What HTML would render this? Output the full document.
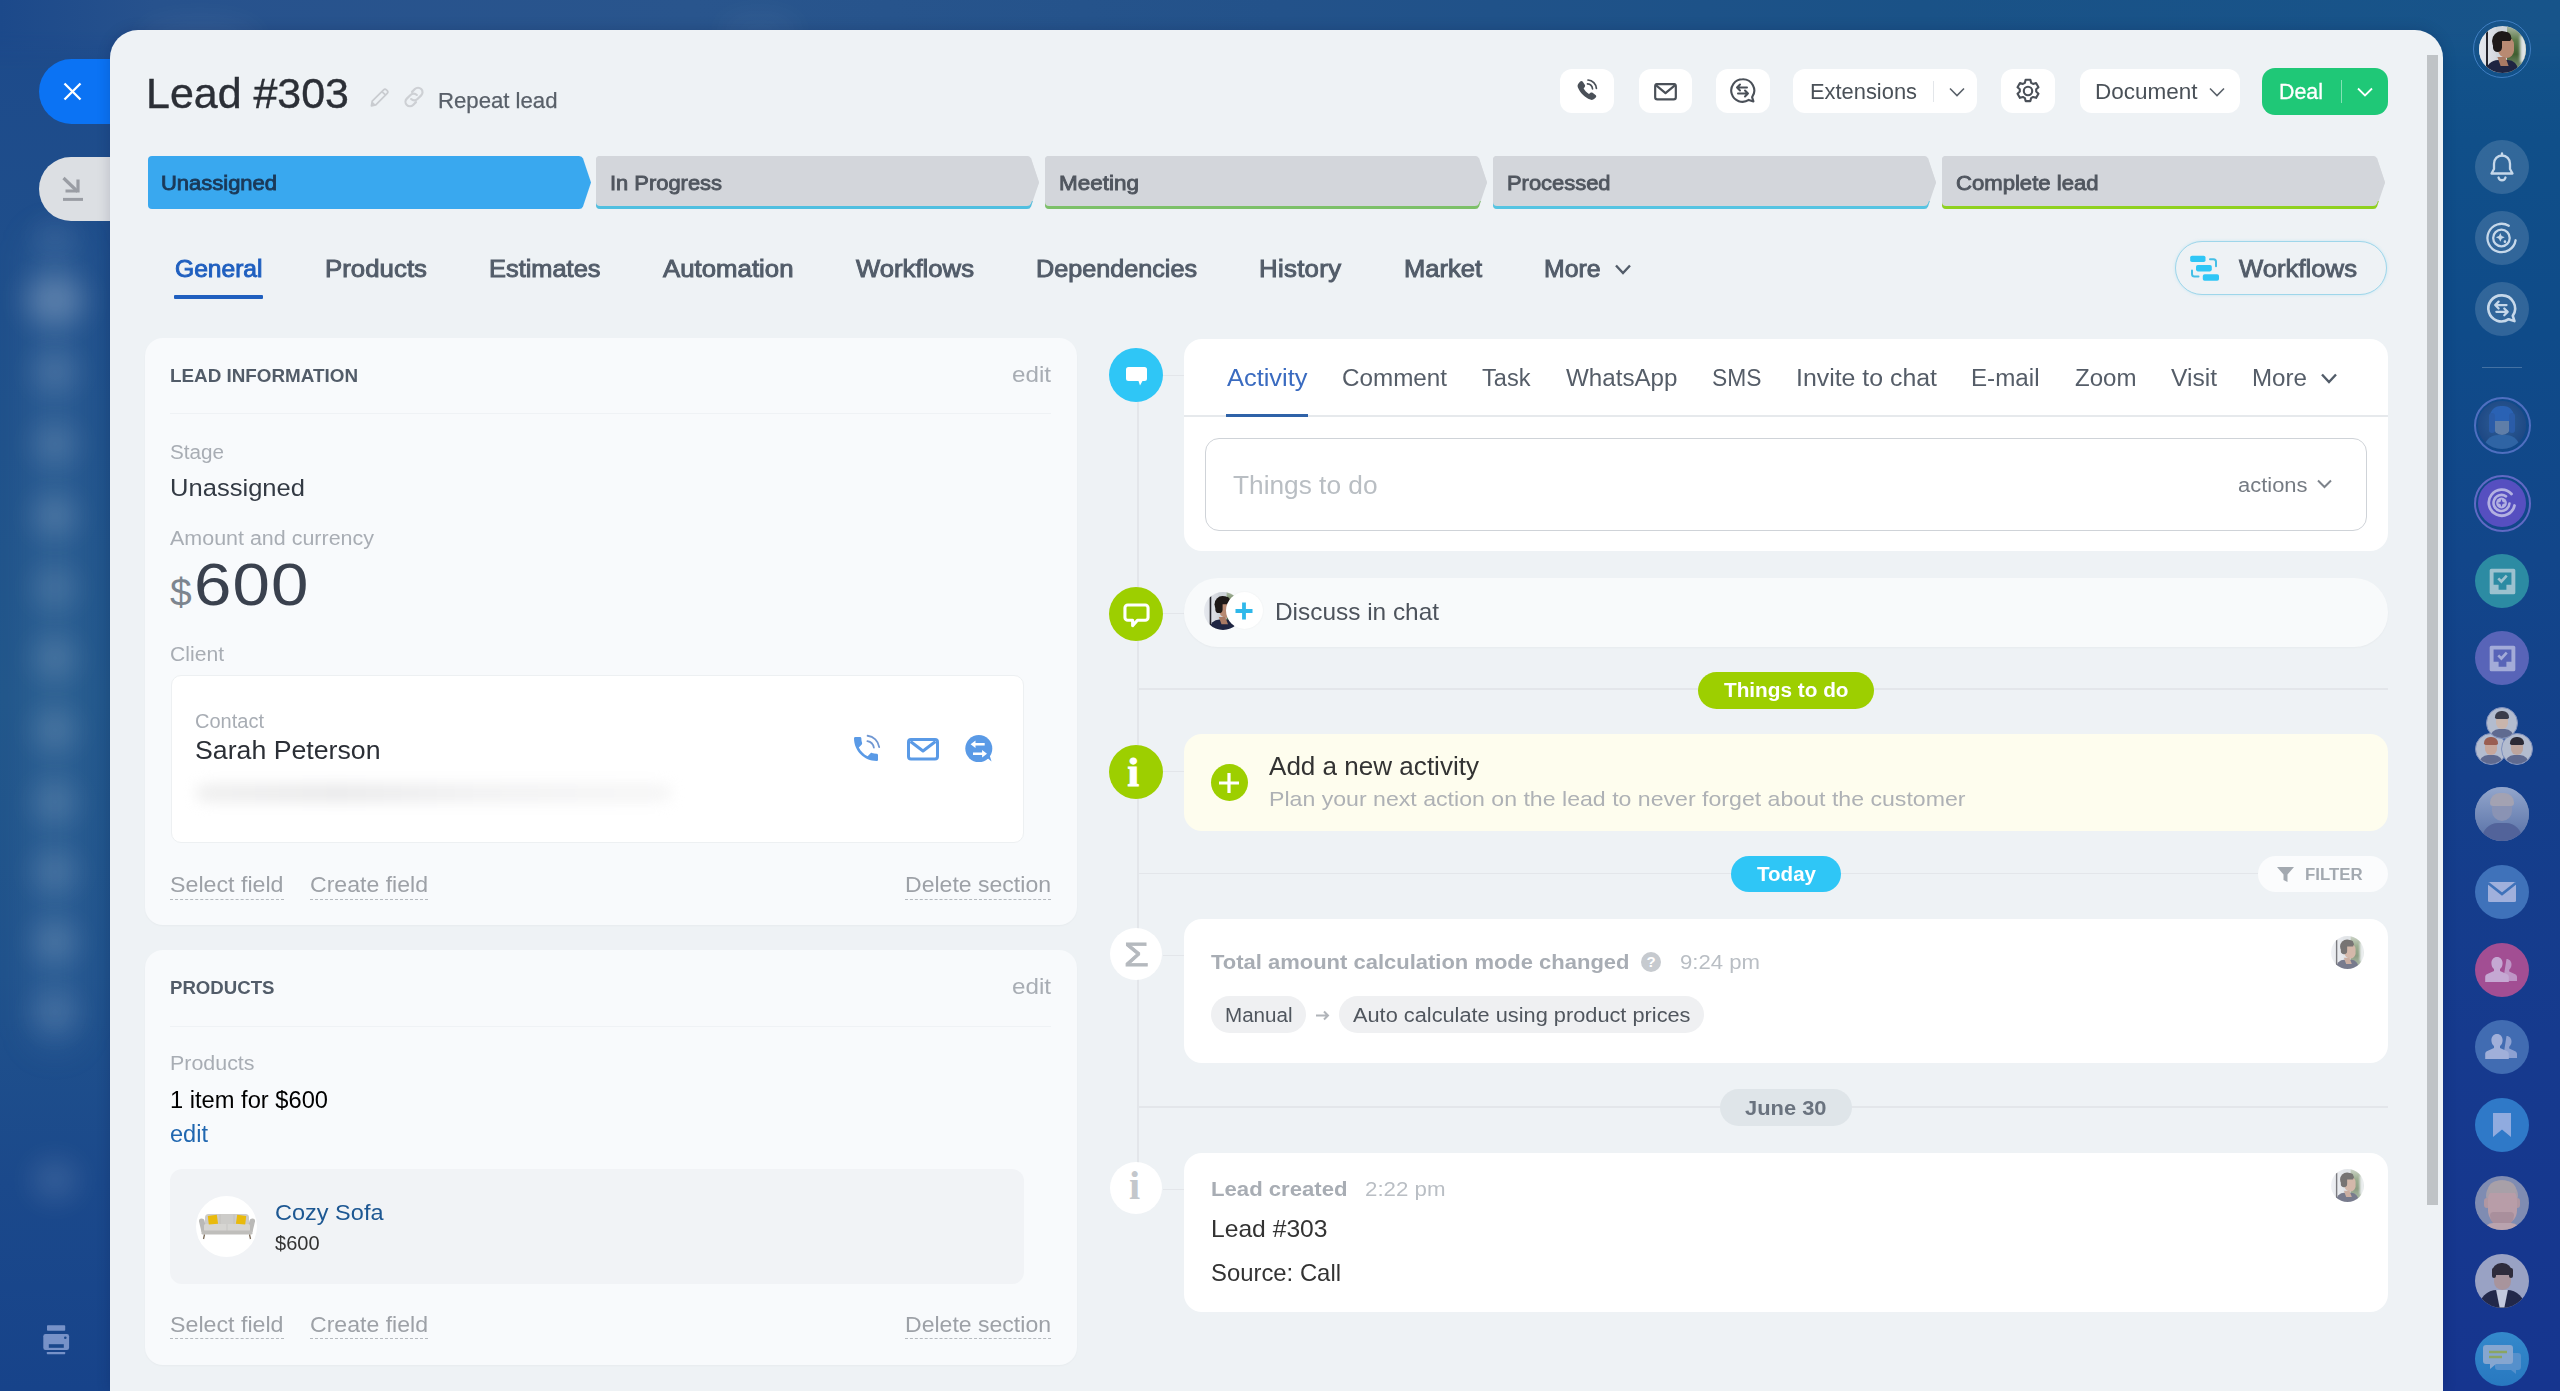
<!DOCTYPE html>
<html lang="en"><head><meta charset="utf-8"><title>Lead #303</title>
<style>
html,body{margin:0;padding:0}
body{width:2560px;height:1391px;overflow:hidden;position:relative;font-family:"Liberation Sans",sans-serif;
background:linear-gradient(90deg,rgba(30,72,140,0) 0%,rgba(30,72,140,0) 92%,rgba(24,56,140,.0) 100%),linear-gradient(180deg,#24538a 0%,#22508b 30%,#1f4a8c 60%,#1c4190 100%);}
.b{position:absolute;display:block}
.t{position:absolute;line-height:1;white-space:nowrap}
</style></head>
<body>
<div class="b" style="left:0;top:0;width:140px;height:1391px;background:linear-gradient(180deg,#1d4a8b 0%,#1f4f8b 22%,#22578b 50%,#20528c 70%,#1b498b 85%,#17438a 100%)"></div>
<div class="b" style="left:2420px;top:0;width:140px;height:1391px;background:linear-gradient(180deg,#15548a 0%,#104f89 10%,#0f4b89 24%,#12468a 40%,#143f8b 56%,#163a8e 75%,#16358f 100%)"></div>
<div class="b" style="left:0;top:0;width:2560px;height:70px;-webkit-mask-image:linear-gradient(180deg,#000 45%,transparent 100%);mask-image:linear-gradient(180deg,#000 45%,transparent 100%);background:linear-gradient(90deg,#1c498a 0%,#27528d 6%,#29558d 27%,#23528a 50%,#1a5287 75%,#17548a 100%)"></div>
<div class="b" style="left:30px;top:230px;width:50px;height:820px;background:rgba(120,160,200,.16);border-radius:25px;filter:blur(16px)"></div>
<div class="b" style="left:25.0px;top:275.0px;width:60px;height:50px;background:rgba(255,255,255,0.22);border-radius:50%;filter:blur(14px)"></div>
<div class="b" style="left:33.0px;top:354.0px;width:44px;height:36px;background:rgba(255,255,255,0.14);border-radius:50%;filter:blur(14px)"></div>
<div class="b" style="left:33.0px;top:426.0px;width:44px;height:36px;background:rgba(255,255,255,0.14);border-radius:50%;filter:blur(14px)"></div>
<div class="b" style="left:33.0px;top:498.0px;width:44px;height:36px;background:rgba(255,255,255,0.16);border-radius:50%;filter:blur(14px)"></div>
<div class="b" style="left:33.0px;top:570.0px;width:44px;height:36px;background:rgba(255,255,255,0.12);border-radius:50%;filter:blur(14px)"></div>
<div class="b" style="left:33.0px;top:640.0px;width:44px;height:36px;background:rgba(255,255,255,0.14);border-radius:50%;filter:blur(14px)"></div>
<div class="b" style="left:33.0px;top:712.0px;width:44px;height:36px;background:rgba(255,255,255,0.14);border-radius:50%;filter:blur(14px)"></div>
<div class="b" style="left:33.0px;top:784.0px;width:44px;height:36px;background:rgba(255,255,255,0.14);border-radius:50%;filter:blur(14px)"></div>
<div class="b" style="left:33.0px;top:854.0px;width:44px;height:36px;background:rgba(255,255,255,0.14);border-radius:50%;filter:blur(14px)"></div>
<div class="b" style="left:33.0px;top:924.0px;width:44px;height:36px;background:rgba(255,255,255,0.16);border-radius:50%;filter:blur(14px)"></div>
<div class="b" style="left:33.0px;top:994.0px;width:44px;height:36px;background:rgba(255,255,255,0.13);border-radius:50%;filter:blur(14px)"></div>
<div class="b" style="left:33.0px;top:1160.0px;width:44px;height:40px;background:rgba(255,255,255,0.12);border-radius:50%;filter:blur(14px)"></div>
<div class="b" style="left:35.0px;top:221.0px;width:40px;height:30px;background:rgba(255,255,255,0.08);border-radius:50%;filter:blur(14px)"></div>
<div class="b" style="left:140.0px;top:20.0px;width:120px;height:40px;background:rgba(255,255,255,0.06);border-radius:50%;filter:blur(14px)"></div>
<div class="b" style="left:720.0px;top:15.0px;width:80px;height:30px;background:rgba(255,255,255,0.05);border-radius:50%;filter:blur(14px)"></div>
<div class="b" style="left:39px;top:59px;width:131px;height:65px;background:#0b73f4;border-radius:0px;border-radius:33px 0 0 33px;"></div>
<svg class="b" style="left:62.5px;top:81.5px;" width="19" height="19" viewBox="0 0 19 19"><path d="M1.500 1.500L17.500 17.500M17.500 1.500L1.500 17.500" stroke="#fff" stroke-width="2.300" fill="none"/></svg>
<div class="b" style="left:39px;top:157px;width:131px;height:64px;background:#dcdfe3;border-radius:0px;border-radius:32px 0 0 32px;"></div>
<svg class="b" style="left:60px;top:175px;" width="26" height="28" viewBox="0 0 26 28"><path d="M3.500 3L17.500 16.500" stroke="#9a9da4" stroke-width="3.200" fill="none"/><path d="M5.500 16H18V4.500" stroke="#9a9da4" stroke-width="3.200" fill="none"/><path d="M3 24.400H23" stroke="#9a9da4" stroke-width="3" fill="none"/></svg>
<svg class="b" style="left:43px;top:1325px;" width="27" height="30" viewBox="0 0 27 30"><rect x="4" y="0.300" width="18.200" height="5.400" rx="0.800" fill="#7792c8"/><rect x="0.300" y="9" width="25.800" height="16" rx="2.200" fill="#7792c8"/><rect x="5.800" y="19.200" width="15" height="3.600" fill="#1a478b"/><circle cx="22.300" cy="12.700" r="1.300" fill="#1a478b"/><rect x="3.800" y="27" width="18.400" height="2.200" rx="0.600" fill="#7792c8"/></svg>
<div class="b" style="left:110px;top:30px;width:2333px;height:1361px;background:#eef2f5;border-radius:0px;border-radius:28px 28px 0 0;box-shadow:0 0 14px rgba(0,10,50,.17);"></div>
<div class="b" style="left:2427px;top:55px;width:11px;height:1150px;background:#bfc3c6;border-radius:0px;"></div>
<div class="t " style="top:72.9px;font-size:42px;color:#2b2f36;left:146.0px;transform:scaleX(1.0225);transform-origin:left center;-webkit-text-stroke:0.4px #2b2f36;">Lead #303</div>
<svg class="b" style="left:369px;top:86px;" width="22" height="22" viewBox="0 0 22 22"><path d="M3.2 15.2L14.6 3.8a2 2 0 0 1 2.8 0l0.8 0.8a2 2 0 0 1 0 2.8L6.8 18.8L2.4 19.8Z M13 5.6l3.6 3.6" stroke="#c9ccd0" stroke-width="1.7" fill="none" stroke-linejoin="round"/><path d="M2.4 19.8l1-4.2 3.2 3.2z" fill="#c9ccd0"/></svg>
<svg class="b" style="left:402px;top:85px;" width="24" height="24" viewBox="0 0 22 22"><g fill="none" stroke="#cdd0d4" stroke-width="2" stroke-linecap="round"><path d="M9.2 6.3l2.6-2.6a4.1 4.1 0 0 1 5.8 5.8l-3.4 3.4a4.1 4.1 0 0 1-5.8 0"/><path d="M12.8 15.7l-2.6 2.6a4.1 4.1 0 0 1-5.8-5.8l3.4-3.4a4.1 4.1 0 0 1 5.8 0"/></g></svg>
<div class="t " style="top:90.4px;font-size:22px;color:#596069;left:438.0px;transform:scaleX(1.0072);transform-origin:left center;-webkit-text-stroke:0.25px #596069;">Repeat lead</div>
<div class="b" style="left:1560px;top:69px;width:54px;height:44px;background:#fff;border-radius:12px;"></div>
<div class="b" style="left:1638.5px;top:69px;width:53.5px;height:44px;background:#fff;border-radius:12px;"></div>
<div class="b" style="left:1716px;top:69px;width:54px;height:44px;background:#fff;border-radius:12px;"></div>
<div class="b" style="left:1793px;top:69px;width:184px;height:44px;background:#fff;border-radius:12px;"></div>
<div class="b" style="left:2001px;top:69px;width:54px;height:44px;background:#fff;border-radius:12px;"></div>
<div class="b" style="left:2080px;top:69px;width:160px;height:44px;background:#fff;border-radius:12px;"></div>
<div class="b" style="left:2262px;top:67.5px;width:125.5px;height:47.0px;background:#1fc877;border-radius:13px;"></div>
<svg class="b" style="left:1574px;top:78px;" width="26" height="26" viewBox="0 0 26 26"><path d="M6.2 3.6c.8-.8 2-.7 2.6.2l2 3c.5.8.4 1.7-.2 2.4l-1 1.1c1.2 2.4 3 4.300 5.400 5.600l1.200-1c.7-.6 1.700-.6 2.400-.1l2.900 2.100c.9.600 1 1.900.2 2.600l-1.300 1.300c-1.100 1.100-2.700 1.400-4.100.800C10.700 19.300 6.300 14.900 3.900 9.400c-.6-1.400-.3-3 .8-4.100z" fill="#4a5058"/><path d="M13.500 5.800a5.400 5.400 0 0 1 5 5M14 2a9 9 0 0 1 8.400 8.400" stroke="#4a5058" stroke-width="1.700" fill="none" stroke-linecap="round"/></svg>
<svg class="b" style="left:1653.5px;top:83px;" width="23" height="17.5" viewBox="0 0 26 20"><rect x="1.2" y="1.2" width="23.600" height="17.600" rx="2.500" fill="none" stroke="#4a5058" stroke-width="2.500"/><path d="M2 2.500L13 11.500L24 2.500" fill="none" stroke="#4a5058" stroke-width="2.500" stroke-linejoin="round"/></svg>
<svg class="b" style="left:1729px;top:77px;" width="28" height="28" viewBox="0 0 28 28"><path d="M13.500 2.200a11.300 11.300 0 1 0 6.300 20.700l4.600 1.500-1.300-4.300A11.300 11.300 0 0 0 13.500 2.200z" fill="none" stroke="#4a5058" stroke-width="2.100" stroke-linejoin="round"/><path d="M8 10.500h10M8 10.500l3-3M8 10.500l3 3M19 16.500H9M19 16.500l-3-3M19 16.500l-3 3" stroke="#4a5058" stroke-width="2" fill="none" stroke-linecap="round" stroke-linejoin="round"/></svg>
<div class="t " style="top:80.9px;font-size:22px;color:#4a5158;left:1810.0px;transform:scaleX(0.9943);transform-origin:left center;">Extensions</div>
<div class="b" style="left:1932.5px;top:81px;width:1.5px;height:21px;background:#e3e6ea;border-radius:0px;"></div>
<svg class="b" style="left:1948px;top:86px;" width="18" height="12" viewBox="0 0 18 12"><path d="M2 2.500l7 7 7-7" stroke="#5a616a" stroke-width="1.600" fill="none"/></svg>
<svg class="b" style="left:2014px;top:77px;" width="28" height="28" viewBox="0 0 28 28"><g fill="none" stroke="#4a5058" stroke-width="2.100" stroke-linejoin="round"><path d="M11.600 2.800h4.800l.7 3 2 1.150 2.950-.9 2.400 4.150-2.250 2.100v2.300l2.250 2.100-2.400 4.150-2.950-.9-2 1.150-.7 3h-4.800l-.7-3-2-1.150-2.950.9-2.400-4.150 2.250-2.100v-2.300L3.550 10.200l2.400-4.150 2.950.9 2-1.150z" stroke-linejoin="round"/><circle cx="14" cy="14" r="4.200"/></g></svg>
<div class="t " style="top:80.9px;font-size:22px;color:#4a5158;left:2095.0px;transform:scaleX(1.0223);transform-origin:left center;">Document</div>
<svg class="b" style="left:2207.5px;top:86px;" width="18" height="12" viewBox="0 0 18 12"><path d="M2 2.500l7 7 7-7" stroke="#5a616a" stroke-width="1.600" fill="none"/></svg>
<div class="t " style="top:80.9px;font-size:22px;color:#fff;left:2278.5px;transform:scaleX(0.9725);transform-origin:left center;-webkit-text-stroke:0.3px #fff;">Deal</div>
<div class="b" style="left:2340.5px;top:80px;width:1.5px;height:23px;background:rgba(255,255,255,.45);border-radius:0px;"></div>
<svg class="b" style="left:2356px;top:86px;" width="18" height="12" viewBox="0 0 18 12"><path d="M2 2.500l7 7 7-7" stroke="#fff" stroke-width="1.800" fill="none"/></svg>
<svg class="b" style="left:148px;top:156px;" width="443" height="53" viewBox="0 0 443 53"><path d="M4 0H431q3 0 4 2.5L443 26.5L435 50.5q-1 2.5-4 2.5H4a4 4 0 0 1-4-4V4a4 4 0 0 1 4-4z" fill="#39a8ef"/></svg>
<div class="t " style="top:172.6px;font-size:20.5px;color:#1b3958;left:161.0px;transform:scaleX(1.0714);transform-origin:left center;-webkit-text-stroke:0.85px #1b3958;">Unassigned</div>
<svg class="b" style="left:596px;top:156px;" width="443" height="53" viewBox="0 0 443 53"><path d="M4 0H431q3 0 4 2.5L443 26.5L435 50.5q-1 2.5-4 2.5H4a4 4 0 0 1-4-4V4a4 4 0 0 1 4-4z" fill="#d3d6db"/><path d="M0 45H436.83L435 50.5q-1 2.5-4 2.5H4a4 4 0 0 1-4-4z" fill="#4fbfe0"/><path d="M4 0H431q3 0 4 2.5L443 26.5L435 47.5q-1 2.5-4 2.5H4a4 4 0 0 1-4-4V4a4 4 0 0 1 4-4z" fill="#d3d6db"/></svg>
<div class="t " style="top:172.6px;font-size:20.5px;color:#50565f;left:609.5px;transform:scaleX(1.0685);transform-origin:left center;-webkit-text-stroke:0.85px #50565f;">In Progress</div>
<svg class="b" style="left:1045px;top:156px;" width="442" height="53" viewBox="0 0 442 53"><path d="M4 0H430q3 0 4 2.5L442 26.5L434 50.5q-1 2.5-4 2.5H4a4 4 0 0 1-4-4V4a4 4 0 0 1 4-4z" fill="#d3d6db"/><path d="M0 45H435.83L434 50.5q-1 2.5-4 2.5H4a4 4 0 0 1-4-4z" fill="#7cc068"/><path d="M4 0H430q3 0 4 2.5L442 26.5L434 47.5q-1 2.5-4 2.5H4a4 4 0 0 1-4-4V4a4 4 0 0 1 4-4z" fill="#d3d6db"/></svg>
<div class="t " style="top:172.6px;font-size:20.5px;color:#50565f;left:1058.5px;transform:scaleX(1.0969);transform-origin:left center;-webkit-text-stroke:0.85px #50565f;">Meeting</div>
<svg class="b" style="left:1493px;top:156px;" width="443" height="53" viewBox="0 0 443 53"><path d="M4 0H431q3 0 4 2.5L443 26.5L435 50.5q-1 2.5-4 2.5H4a4 4 0 0 1-4-4V4a4 4 0 0 1 4-4z" fill="#d3d6db"/><path d="M0 45H436.83L435 50.5q-1 2.5-4 2.5H4a4 4 0 0 1-4-4z" fill="#55c4e2"/><path d="M4 0H431q3 0 4 2.5L443 26.5L435 47.5q-1 2.5-4 2.5H4a4 4 0 0 1-4-4V4a4 4 0 0 1 4-4z" fill="#d3d6db"/></svg>
<div class="t " style="top:172.6px;font-size:20.5px;color:#50565f;left:1507.0px;transform:scaleX(1.0686);transform-origin:left center;-webkit-text-stroke:0.85px #50565f;">Processed</div>
<svg class="b" style="left:1942px;top:156px;" width="443" height="53" viewBox="0 0 443 53"><path d="M4 0H431q3 0 4 2.5L443 26.5L435 50.5q-1 2.5-4 2.5H4a4 4 0 0 1-4-4V4a4 4 0 0 1 4-4z" fill="#d3d6db"/><path d="M0 45H436.83L435 50.5q-1 2.5-4 2.5H4a4 4 0 0 1-4-4z" fill="#8fd11f"/><path d="M4 0H431q3 0 4 2.5L443 26.5L435 47.5q-1 2.5-4 2.5H4a4 4 0 0 1-4-4V4a4 4 0 0 1 4-4z" fill="#d3d6db"/></svg>
<div class="t " style="top:172.6px;font-size:20.5px;color:#50565f;left:1956.0px;transform:scaleX(1.0780);transform-origin:left center;-webkit-text-stroke:0.85px #50565f;">Complete lead</div>
<div class="t " style="top:258.0px;font-size:23px;color:#1f5fbf;left:175.0px;transform:scaleX(1.0693);transform-origin:left center;-webkit-text-stroke:0.9px #1f5fbf;">General</div>
<div class="t " style="top:258.0px;font-size:23px;color:#525c69;left:324.5px;transform:scaleX(1.1200);transform-origin:left center;letter-spacing:0.04px;-webkit-text-stroke:0.9px #525c69;">Products</div>
<div class="t " style="top:258.0px;font-size:23px;color:#525c69;left:488.5px;transform:scaleX(1.1042);transform-origin:left center;-webkit-text-stroke:0.9px #525c69;">Estimates</div>
<div class="t " style="top:258.0px;font-size:23px;color:#525c69;left:662.5px;transform:scaleX(1.1200);transform-origin:left center;letter-spacing:0.02px;-webkit-text-stroke:0.9px #525c69;">Automation</div>
<div class="t " style="top:258.0px;font-size:23px;color:#525c69;left:855.5px;transform:scaleX(1.1169);transform-origin:left center;-webkit-text-stroke:0.9px #525c69;">Workflows</div>
<div class="t " style="top:258.0px;font-size:23px;color:#525c69;left:1036.0px;transform:scaleX(1.0948);transform-origin:left center;-webkit-text-stroke:0.9px #525c69;">Dependencies</div>
<div class="t " style="top:258.0px;font-size:23px;color:#525c69;left:1259.0px;transform:scaleX(1.1200);transform-origin:left center;letter-spacing:0.28px;-webkit-text-stroke:0.9px #525c69;">History</div>
<div class="t " style="top:258.0px;font-size:23px;color:#525c69;left:1403.5px;transform:scaleX(1.1097);transform-origin:left center;-webkit-text-stroke:0.9px #525c69;">Market</div>
<div class="t " style="top:258.0px;font-size:23px;color:#525c69;left:1544.0px;transform:scaleX(1.0782);transform-origin:left center;-webkit-text-stroke:0.9px #525c69;">More</div>
<div class="b" style="left:174px;top:295px;width:89px;height:3.5px;background:#1f5fbf;border-radius:1px;"></div>
<svg class="b" style="left:1614px;top:263px;" width="18" height="13" viewBox="0 0 18 13"><path d="M2 2.500l7 7.500 7-7.500" stroke="#525c69" stroke-width="2.400" fill="none"/></svg>
<div class="b" style="left:2175px;top:241px;width:212px;height:54px;background:#eef2f5;border-radius:27px;box-sizing:border-box;border:1.5px solid #9ed6ea;box-shadow:0 0 3px rgba(120,210,240,.35);"></div>
<svg class="b" style="left:2189px;top:254px;" width="32" height="30" viewBox="0 0 32 30"><rect x="1.200" y="1.700" width="15.300" height="6.400" rx="1.800" fill="#2fc6f6"/><rect x="7" y="11" width="15.800" height="6.400" rx="1.800" fill="#2fc6f6"/><rect x="13.800" y="20.200" width="16.200" height="6.600" rx="1.800" fill="#2fc6f6"/><path d="M21 5.300h3.500a2.500 2.500 0 0 1 2.500 2.500v4.500M3 16.500v3.500a2.500 2.500 0 0 0 2.500 2.500h4" stroke="#45bfe6" stroke-width="2" fill="none" stroke-linecap="round"/></svg>
<div class="t " style="top:258.0px;font-size:23px;color:#525c69;left:2239.0px;transform:scaleX(1.1169);transform-origin:left center;-webkit-text-stroke:0.8px #525c69;">Workflows</div>
<div class="b" style="left:145px;top:338px;width:932px;height:587px;background:#f8fafc;border-radius:18px;box-shadow:0 1px 2px rgba(0,0,0,.03);"></div>
<div class="t " style="top:367.3px;font-size:18.5px;color:#525c69;font-weight:700;left:170.0px;transform:scaleX(1.0182);transform-origin:left center;">LEAD INFORMATION</div>
<div class="t " style="top:364.4px;font-size:22px;color:#a8adb4;left:1012.0px;transform:scaleX(1.0995);transform-origin:left center;">edit</div>
<div class="b" style="left:170px;top:413px;width:881px;height:1.1999999999999886px;background:#eff2f5;border-radius:0px;"></div>
<div class="t " style="top:443.0px;font-size:19.5px;color:#a8adb4;left:170.0px;transform:scaleX(1.0597);transform-origin:left center;">Stage</div>
<div class="t " style="top:475.8px;font-size:24.5px;color:#333a44;left:170.0px;transform:scaleX(1.0433);transform-origin:left center;">Unassigned</div>
<div class="t " style="top:529.0px;font-size:19.5px;color:#a8adb4;left:170.0px;transform:scaleX(1.1006);transform-origin:left center;">Amount and currency</div>
<div class="t " style="top:573.0px;font-size:39px;color:#7d858f;left:170.0px;">$</div>
<div class="t " style="top:554.7px;font-size:60px;color:#3a414e;left:193.5px;transform:scaleX(1.1200);transform-origin:left center;letter-spacing:1.06px;">600</div>
<div class="t " style="top:644.5px;font-size:19.5px;color:#a8adb4;left:170.0px;transform:scaleX(1.0831);transform-origin:left center;">Client</div>
<div class="b" style="left:170.5px;top:674.5px;width:853.5px;height:168.0px;background:#fff;border-radius:10px;box-sizing:border-box;border:1px solid #edf0f2;"></div>
<div class="t " style="top:712.0px;font-size:19.5px;color:#a8adb4;left:194.5px;transform:scaleX(1.0267);transform-origin:left center;">Contact</div>
<div class="t " style="top:737.0px;font-size:26px;color:#2b2f36;left:194.5px;transform:scaleX(1.0267);transform-origin:left center;">Sarah Peterson</div>
<div class="b" style="left:196px;top:784px;width:476px;height:18px;background:linear-gradient(90deg,#efefef,#e9e9ea 30%,#f1f1f2 60%,#f6f6f6);border-radius:9px;filter:blur(7px)"></div>
<svg class="b" style="left:850px;top:733px;" width="32" height="32" viewBox="0 0 24 24"><path d="M6.62 10.79c1.44 2.83 3.76 5.14 6.59 6.59l2.200-2.200c.27-.27.67-.36 1.020-.24 1.120.37 2.330.57 3.570.57.55 0 1 .45 1 1V20c0 .55-.45 1-1 1-9.390 0-17-7.610-17-17 0-.55.45-1 1-1h3.500c.55 0 1 .45 1 1 0 1.250.2 2.450.57 3.570.11.35.03.74-.25 1.020l-2.200 2.200z" fill="#5a9ae6"/><path d="M13.040 6.090A6 6 0 0 1 17.900 10.960M13.200 2.070A10 10 0 0 1 21.900 10.600" stroke="#7097d2" stroke-width="1.350" fill="none" stroke-linecap="round"/></svg>
<svg class="b" style="left:907px;top:738px;" width="32" height="22.5" viewBox="0 0 32 22.500"><rect x="1.500" y="1.500" width="29" height="19.500" rx="2.500" fill="none" stroke="#5a9ae6" stroke-width="3"/><path d="M3.500 3.500L16 13L28.500 3.500" fill="none" stroke="#5a9ae6" stroke-width="3" stroke-linejoin="round"/></svg>
<svg class="b" style="left:964px;top:734px;" width="31" height="31" viewBox="0 0 31 31"><circle cx="14.800" cy="14.600" r="13.500" fill="#5a9ae6"/><path d="M21 22l6.500 5.500-2.500-8z" fill="#5a9ae6"/><path d="M9.500 10.300h11.200M9 19.700h11" stroke="#fff" stroke-width="2.500" fill="none"/><path d="M6.600 10.300l4.900-3.700v7.400zM23 19.700l-4.900-3.700v7.400z" fill="#fff"/></svg>
<div class="t " style="top:874.4px;font-size:22px;color:#9da1a7;left:170.0px;transform:scaleX(1.0547);transform-origin:left center;">Select field</div>
<div class="b" style="left:170px;top:898.5px;width:113.5px;height:0;border-top:1.5px dashed #b5babf;"></div>
<div class="t " style="top:874.4px;font-size:22px;color:#9da1a7;left:309.5px;transform:scaleX(1.0489);transform-origin:left center;">Create field</div>
<div class="b" style="left:309.5px;top:898.5px;width:118.0px;height:0;border-top:1.5px dashed #b5babf;"></div>
<div class="t " style="top:874.4px;font-size:22px;color:#9da1a7;left:905.0px;transform:scaleX(1.0473);transform-origin:left center;">Delete section</div>
<div class="b" style="left:905px;top:898.5px;width:146px;height:0;border-top:1.5px dashed #b5babf;"></div>
<div class="b" style="left:145px;top:950px;width:932px;height:415px;background:#f8fafc;border-radius:18px;box-shadow:0 1px 2px rgba(0,0,0,.03);"></div>
<div class="t " style="top:978.8px;font-size:18.5px;color:#525c69;font-weight:700;left:170.0px;transform:scaleX(1.0066);transform-origin:left center;">PRODUCTS</div>
<div class="t " style="top:975.9px;font-size:22px;color:#a8adb4;left:1012.0px;transform:scaleX(1.0995);transform-origin:left center;">edit</div>
<div class="b" style="left:170px;top:1026px;width:881px;height:1.2000000000000455px;background:#eff2f5;border-radius:0px;"></div>
<div class="t " style="top:1054.0px;font-size:19.5px;color:#a8adb4;left:170.0px;transform:scaleX(1.0981);transform-origin:left center;">Products</div>
<div class="t " style="top:1089.1px;font-size:23.5px;color:#000;left:170.0px;transform:scaleX(1.0079);transform-origin:left center;">1 item for $600</div>
<div class="t " style="top:1123.1px;font-size:23.5px;color:#2067b0;left:170.0px;transform:scaleX(1.0029);transform-origin:left center;">edit</div>
<div class="b" style="left:170px;top:1169px;width:854px;height:114.5px;background:#f1f3f6;border-radius:12px;"></div>
<div class="b" style="left:196px;top:1195.5px;width:61px;height:61.0px;background:#fff;border-radius:31px;"></div>
<svg class="b" style="left:198px;top:1213px;" width="58" height="27" viewBox="0 0 58 27"><path d="M7 12V4.500c0-2 1.200-3.500 3.500-3.500h37c2.300 0 3.500 1.500 3.500 3.500V12z" fill="#cdccc9"/><path d="M22 1.500v10M36 1.500v10" stroke="#c0bfbc" stroke-width=".8"/><path d="M1 8.500c-.4-1.800.8-3 2.600-3 1.500 0 2.500.8 2.900 2.300L9 19H3.500z" fill="#bab9b7"/><path d="M57 8.500c.4-1.800-.8-3-2.600-3-1.500 0-2.500.8-2.900 2.300L49 19h5.500z" fill="#bab9b7"/><rect x="6" y="11" width="46" height="7.500" rx="1.500" fill="#d6d5d2"/><path d="M29 11v7" stroke="#c4c3c0" stroke-width=".8"/><rect x="3.500" y="17.500" width="51" height="4" rx="1.200" fill="#bfbebb"/><path d="M9.800 3l9-1.200 1.300 9-9.300.8z" fill="#e9ba0c"/><path d="M48.200 3l-9-1.200-1.300 9 9.300.8z" fill="#e9ba0c"/><path d="M6.500 21.500l-1 4.500M51.500 21.500l1 4.500" stroke="#7a6a58" stroke-width="1.300"/></svg>
<div class="t " style="top:1202.0px;font-size:22.5px;color:#1d5792;left:275.0px;transform:scaleX(1.0453);transform-origin:left center;">Cozy Sofa</div>
<div class="t " style="top:1233.1px;font-size:20px;color:#333;left:275.0px;transform:scaleX(1.0002);transform-origin:left center;">$600</div>
<div class="t " style="top:1313.9px;font-size:22px;color:#9da1a7;left:170.0px;transform:scaleX(1.0547);transform-origin:left center;">Select field</div>
<div class="b" style="left:170px;top:1338.0px;width:113.5px;height:0;border-top:1.5px dashed #b5babf;"></div>
<div class="t " style="top:1313.9px;font-size:22px;color:#9da1a7;left:309.5px;transform:scaleX(1.0489);transform-origin:left center;">Create field</div>
<div class="b" style="left:309.5px;top:1338.0px;width:118.0px;height:0;border-top:1.5px dashed #b5babf;"></div>
<div class="t " style="top:1313.9px;font-size:22px;color:#9da1a7;left:905.0px;transform:scaleX(1.0473);transform-origin:left center;">Delete section</div>
<div class="b" style="left:905px;top:1338.0px;width:146px;height:0;border-top:1.5px dashed #b5babf;"></div>
<div class="b" style="left:1137px;top:375px;width:1.5px;height:790px;background:#e3e6ea;border-radius:0px;"></div>
<div class="b" style="left:1163px;top:374.5px;width:21px;height:1.5px;background:#e3e6ea;border-radius:0px;"></div>
<div class="b" style="left:1163px;top:612.5px;width:21px;height:1.5px;background:#e3e6ea;border-radius:0px;"></div>
<div class="b" style="left:1163px;top:770.5px;width:21px;height:1.5px;background:#e3e6ea;border-radius:0px;"></div>
<div class="b" style="left:1163px;top:954.5px;width:21px;height:1.5px;background:#e3e6ea;border-radius:0px;"></div>
<div class="b" style="left:1163px;top:1188.5px;width:21px;height:1.5px;background:#e3e6ea;border-radius:0px;"></div>
<div class="b" style="left:1184px;top:338.5px;width:1203.5px;height:212.5px;background:#fff;border-radius:18px;"></div>
<div class="b" style="left:1184px;top:415px;width:1203.5px;height:1.5px;background:#e6e9ec;border-radius:0px;"></div>
<div class="t " style="top:366.6px;font-size:23.5px;color:#3a6bc0;left:1226.5px;transform:scaleX(1.0816);transform-origin:left center;">Activity</div>
<div class="t " style="top:366.6px;font-size:23.5px;color:#555d68;left:1341.5px;transform:scaleX(1.0308);transform-origin:left center;">Comment</div>
<div class="t " style="top:366.6px;font-size:23.5px;color:#555d68;left:1481.5px;transform:scaleX(1.0037);transform-origin:left center;">Task</div>
<div class="t " style="top:366.6px;font-size:23.5px;color:#555d68;left:1565.5px;transform:scaleX(1.0285);transform-origin:left center;">WhatsApp</div>
<div class="t " style="top:366.6px;font-size:23.5px;color:#555d68;left:1711.5px;transform:scaleX(0.9720);transform-origin:left center;">SMS</div>
<div class="t " style="top:366.6px;font-size:23.5px;color:#555d68;left:1795.5px;transform:scaleX(1.0582);transform-origin:left center;">Invite to chat</div>
<div class="t " style="top:366.6px;font-size:23.5px;color:#555d68;left:1971.0px;transform:scaleX(1.0287);transform-origin:left center;">E-mail</div>
<div class="t " style="top:366.6px;font-size:23.5px;color:#555d68;left:2074.5px;transform:scaleX(1.0238);transform-origin:left center;">Zoom</div>
<div class="t " style="top:366.6px;font-size:23.5px;color:#555d68;left:2171.0px;transform:scaleX(1.0461);transform-origin:left center;">Visit</div>
<div class="t " style="top:366.6px;font-size:23.5px;color:#555d68;left:2252.0px;transform:scaleX(1.0272);transform-origin:left center;">More</div>
<div class="b" style="left:1226px;top:414px;width:81.5px;height:2.5px;background:#2f62a8;border-radius:0px;"></div>
<svg class="b" style="left:2320px;top:372px;" width="18" height="13" viewBox="0 0 18 13"><path d="M2 2.500l7 7.500 7-7.500" stroke="#525c69" stroke-width="2.400" fill="none"/></svg>
<div class="b" style="left:1204.5px;top:438px;width:1162.5px;height:92.5px;background:#fff;border-radius:14px;box-sizing:border-box;border:1.5px solid #cfd3d8;"></div>
<div class="t " style="top:472.8px;font-size:25px;color:#b9bec3;left:1232.5px;transform:scaleX(1.0503);transform-origin:left center;">Things to do</div>
<div class="t " style="top:474.6px;font-size:20px;color:#757b83;left:2237.5px;transform:scaleX(1.0967);transform-origin:left center;">actions</div>
<svg class="b" style="left:2316px;top:478px;" width="17" height="12" viewBox="0 0 17 12"><path d="M2 2.500l6.500 6.500 6.500-6.500" stroke="#7d838b" stroke-width="2" fill="none"/></svg>
<div class="b" style="left:1109px;top:348px;width:54px;height:54px;background:#2fc6f6;border-radius:27px;"></div>
<svg class="b" style="left:1125px;top:366px;" width="23" height="21" viewBox="0 0 23 21"><path d="M3.500 1h16a2.500 2.500 0 0 1 2.500 2.500v9a2.500 2.500 0 0 1-2.500 2.500h-2l-2.500 4.500-1.500-4.500H3.500a2.500 2.500 0 0 1-2.500-2.500v-9A2.500 2.500 0 0 1 3.500 1z" fill="#fff"/></svg>
<div class="b" style="left:1109px;top:586.5px;width:54px;height:54.0px;background:#9dcf00;border-radius:27px;"></div>
<svg class="b" style="left:1122.5px;top:603px;" width="27" height="26" viewBox="0 0 28 27"><path d="M5 2h18a3 3 0 0 1 3 3v10a3 3 0 0 1-3 3h-8l-5 5.500V18H5a3 3 0 0 1-3-3V5a3 3 0 0 1 3-3z" fill="none" stroke="#fff" stroke-width="3.200" stroke-linejoin="round"/></svg>
<div class="b" style="left:1184px;top:578px;width:1203.5px;height:68.5px;background:#f8fafb;border-radius:34px;box-shadow:0 1px 2px rgba(0,0,0,.03);"></div>
<div class="b" style="left:1203.8px;top:591.8px;width:38px;height:38px;border-radius:50%;overflow:hidden;opacity:1"><div class="b" style="left:0;top:0;width:47px;height:47px;transform:scale(0.8085);transform-origin:0 0"><div class="b" style="left:0;top:0;width:47px;height:47px;background:#cfd4da"></div><div class="b" style="left:0;top:0;width:17px;height:47px;background:linear-gradient(90deg,#e6e9ef,#d5d8de)"></div><div class="b" style="left:6.5px;top:5px;width:2.2px;height:44px;background:#23232b"></div><div class="b" style="left:28px;top:0;width:20px;height:47px;background:linear-gradient(180deg,#aeb9a6 0%,#5d7a4a 30%,#3f5e30 60%,#8fa18a 100%)"></div><div class="b" style="left:41px;top:8px;width:8px;height:30px;background:#dfe4e6;border-radius:4px 0 0 4px;filter:blur(1.5px)"></div><div class="b" style="left:13px;top:5px;width:20px;height:20px;border-radius:10px;background:#1d1817"></div><div class="b" style="left:18.5px;top:11px;width:16px;height:21px;border-radius:8px 8px 8px 9px;background:#b88a72"></div><div class="b" style="left:14px;top:9px;width:9px;height:17px;border-radius:5px;background:#1d1817"></div><div class="b" style="left:18px;top:6px;width:14px;height:9px;border-radius:7px 7px 2px 6px;background:#1d1817"></div><div class="b" style="left:7px;top:34px;width:32px;height:16px;border-radius:12px 10px 0 0;background:#1f2542"></div><div class="b" style="left:20px;top:31px;width:8px;height:9px;background:#a97a64;transform:skewX(20deg)"></div></div></div>
<div class="b" style="left:1226px;top:592.3px;width:37px;height:37.0px;background:#fff;border-radius:18.5px;box-shadow:0 0 2px rgba(0,0,0,.06);"></div>
<svg class="b" style="left:1235px;top:601.5px;" width="18" height="18" viewBox="0 0 18 18"><path d="M9 0.500v17M0.500 9h17" stroke="#2fb8ea" stroke-width="3.800" fill="none"/></svg>
<div class="t " style="top:599.7px;font-size:24px;color:#4d535c;left:1275.0px;transform:scaleX(1.0162);transform-origin:left center;">Discuss in chat</div>
<div class="b" style="left:1138px;top:688px;width:1249.5px;height:1.5px;background:#e3e6ea;border-radius:0px;"></div>
<div class="b" style="left:1697.5px;top:671.5px;width:176.5px;height:37.5px;background:#9dcf00;border-radius:19px;"></div>
<div class="t " style="top:680.1px;font-size:20px;color:#fff;font-weight:700;left:1723.5px;transform:scaleX(1.0377);transform-origin:left center;">Things to do</div>
<div class="b" style="left:1109px;top:744.5px;width:54px;height:54.0px;background:#9dcf00;border-radius:27px;"></div>
<div class="t " style="top:751.8px;font-size:41px;color:#fff;font-weight:700;left:1127.5px;-webkit-text-stroke:1.2px #fff;font-family:Liberation Serif,DejaVu Serif,serif;">i</div>
<div class="b" style="left:1184px;top:733.5px;width:1203.5px;height:97.0px;background:#fefdee;border-radius:18px;"></div>
<div class="b" style="left:1210.5px;top:764px;width:37.0px;height:37px;background:#9dcf00;border-radius:19px;"></div>
<svg class="b" style="left:1218px;top:771.5px;" width="22" height="22" viewBox="0 0 22 22"><path d="M11 1v20M1 11h20" stroke="#fff" stroke-width="3.200" fill="none"/></svg>
<div class="t " style="top:754.3px;font-size:25px;color:#333;left:1269.0px;transform:scaleX(1.0422);transform-origin:left center;">Add a new activity</div>
<div class="t " style="top:788.2px;font-size:21px;color:#aeb1b5;left:1269.0px;transform:scaleX(1.1008);transform-origin:left center;">Plan your next action on the lead to never forget about the customer</div>
<div class="b" style="left:1138px;top:872.5px;width:1120px;height:1.5px;background:#e3e6ea;border-radius:0px;"></div>
<div class="b" style="left:1730.5px;top:855.5px;width:110.5px;height:36.5px;background:#2fc6f6;border-radius:19px;"></div>
<div class="t " style="top:864.1px;font-size:20px;color:#fff;font-weight:700;left:1756.5px;transform:scaleX(1.0277);transform-origin:left center;">Today</div>
<div class="b" style="left:2258px;top:856px;width:129.5px;height:36px;background:#fbfcfd;border-radius:18px;"></div>
<svg class="b" style="left:2275.5px;top:866px;" width="19" height="17" viewBox="0 0 19 17"><path d="M1 1h17l-6.500 7.500V16l-4-2V8.500z" fill="#a3a9b0"/></svg>
<div class="t " style="top:867.0px;font-size:16px;color:#a3a9b0;font-weight:700;left:2304.5px;transform:scaleX(1.0492);transform-origin:left center;">FILTER</div>
<div class="b" style="left:1109.5px;top:928px;width:52.0px;height:52px;background:#fff;border-radius:26px;"></div>
<div class="t " style="top:937.2px;font-size:34px;color:#b5b9be;left:1124.0px;-webkit-text-stroke:0.8px #b5b9be;transform:scaleX(1.18);transform-origin:left center;">Σ</div>
<div class="b" style="left:1184px;top:919px;width:1203.5px;height:144px;background:#fff;border-radius:18px;"></div>
<div class="t " style="top:951.2px;font-size:21px;color:#a8adb4;font-weight:700;left:1211.0px;transform:scaleX(1.0467);transform-origin:left center;">Total amount calculation mode changed</div>
<div class="b" style="left:1641px;top:951.5px;width:20px;height:20.0px;background:#c6cacf;border-radius:10px;"></div>
<div class="t " style="top:954.3px;font-size:15px;color:#fff;font-weight:700;left:1646.5px;">?</div>
<div class="t " style="top:951.2px;font-size:21px;color:#b9bec4;left:1679.5px;transform:scaleX(1.0543);transform-origin:left center;">9:24 pm</div>
<div class="b" style="left:1211px;top:996px;width:95px;height:37px;background:#eff0f2;border-radius:18.5px;"></div>
<div class="t " style="top:1005.1px;font-size:20px;color:#50565e;left:1225.0px;transform:scaleX(1.0290);transform-origin:left center;">Manual</div>
<svg class="b" style="left:1315px;top:1010px;" width="15" height="11" viewBox="0 0 15 11"><path d="M1 5.500h12M9 1.500l4 4-4 4" stroke="#b0b4b9" stroke-width="2" fill="none"/></svg>
<div class="b" style="left:1339px;top:996px;width:365px;height:37px;background:#eff0f2;border-radius:18.5px;"></div>
<div class="t " style="top:1005.1px;font-size:20px;color:#50565e;left:1353.0px;transform:scaleX(1.0881);transform-origin:left center;">Auto calculate using product prices</div>
<div class="b" style="left:2330.5px;top:936.3px;width:33px;height:33px;border-radius:50%;overflow:hidden;opacity:0.6"><div class="b" style="left:0;top:0;width:47px;height:47px;transform:scale(0.7021);transform-origin:0 0"><div class="b" style="left:0;top:0;width:47px;height:47px;background:#cfd4da"></div><div class="b" style="left:0;top:0;width:17px;height:47px;background:linear-gradient(90deg,#e6e9ef,#d5d8de)"></div><div class="b" style="left:6.5px;top:5px;width:2.2px;height:44px;background:#23232b"></div><div class="b" style="left:28px;top:0;width:20px;height:47px;background:linear-gradient(180deg,#aeb9a6 0%,#5d7a4a 30%,#3f5e30 60%,#8fa18a 100%)"></div><div class="b" style="left:41px;top:8px;width:8px;height:30px;background:#dfe4e6;border-radius:4px 0 0 4px;filter:blur(1.5px)"></div><div class="b" style="left:13px;top:5px;width:20px;height:20px;border-radius:10px;background:#1d1817"></div><div class="b" style="left:18.5px;top:11px;width:16px;height:21px;border-radius:8px 8px 8px 9px;background:#b88a72"></div><div class="b" style="left:14px;top:9px;width:9px;height:17px;border-radius:5px;background:#1d1817"></div><div class="b" style="left:18px;top:6px;width:14px;height:9px;border-radius:7px 7px 2px 6px;background:#1d1817"></div><div class="b" style="left:7px;top:34px;width:32px;height:16px;border-radius:12px 10px 0 0;background:#1f2542"></div><div class="b" style="left:20px;top:31px;width:8px;height:9px;background:#a97a64;transform:skewX(20deg)"></div></div></div>
<div class="b" style="left:1138px;top:1106px;width:1249.5px;height:1.5px;background:#e3e6ea;border-radius:0px;"></div>
<div class="b" style="left:1719.5px;top:1089px;width:132.0px;height:36.5px;background:#dfe5e9;border-radius:18.5px;"></div>
<div class="t " style="top:1097.6px;font-size:20px;color:#6a737f;font-weight:700;left:1745.0px;transform:scaleX(1.0942);transform-origin:left center;">June 30</div>
<div class="b" style="left:1109.5px;top:1162px;width:52.0px;height:52px;background:#fff;border-radius:26px;"></div>
<div class="t " style="top:1166.1px;font-size:40px;color:#c3c7cc;font-weight:700;left:1129.0px;font-family:Liberation Serif,DejaVu Serif,serif;">i</div>
<div class="b" style="left:1184px;top:1152.5px;width:1203.5px;height:159.5px;background:#fff;border-radius:18px;"></div>
<div class="t " style="top:1178.2px;font-size:21px;color:#a8adb4;font-weight:700;left:1211.0px;transform:scaleX(1.0536);transform-origin:left center;">Lead created</div>
<div class="t " style="top:1178.2px;font-size:21px;color:#b9bec4;left:1365.0px;transform:scaleX(1.0609);transform-origin:left center;">2:22 pm</div>
<div class="t " style="top:1217.2px;font-size:24px;color:#333;left:1211.0px;transform:scaleX(1.0269);transform-origin:left center;">Lead #303</div>
<div class="t " style="top:1260.7px;font-size:24px;color:#333;left:1211.0px;transform:scaleX(0.9945);transform-origin:left center;">Source: Call</div>
<div class="b" style="left:2330.5px;top:1169.3px;width:33px;height:33px;border-radius:50%;overflow:hidden;opacity:0.6"><div class="b" style="left:0;top:0;width:47px;height:47px;transform:scale(0.7021);transform-origin:0 0"><div class="b" style="left:0;top:0;width:47px;height:47px;background:#cfd4da"></div><div class="b" style="left:0;top:0;width:17px;height:47px;background:linear-gradient(90deg,#e6e9ef,#d5d8de)"></div><div class="b" style="left:6.5px;top:5px;width:2.2px;height:44px;background:#23232b"></div><div class="b" style="left:28px;top:0;width:20px;height:47px;background:linear-gradient(180deg,#aeb9a6 0%,#5d7a4a 30%,#3f5e30 60%,#8fa18a 100%)"></div><div class="b" style="left:41px;top:8px;width:8px;height:30px;background:#dfe4e6;border-radius:4px 0 0 4px;filter:blur(1.5px)"></div><div class="b" style="left:13px;top:5px;width:20px;height:20px;border-radius:10px;background:#1d1817"></div><div class="b" style="left:18.5px;top:11px;width:16px;height:21px;border-radius:8px 8px 8px 9px;background:#b88a72"></div><div class="b" style="left:14px;top:9px;width:9px;height:17px;border-radius:5px;background:#1d1817"></div><div class="b" style="left:18px;top:6px;width:14px;height:9px;border-radius:7px 7px 2px 6px;background:#1d1817"></div><div class="b" style="left:7px;top:34px;width:32px;height:16px;border-radius:12px 10px 0 0;background:#1f2542"></div><div class="b" style="left:20px;top:31px;width:8px;height:9px;background:#a97a64;transform:skewX(20deg)"></div></div></div>
<div class="b" style="left:2473.0px;top:20.0px;width:58px;height:58px;border-radius:50%;background:transparent;overflow:hidden;opacity:1;box-sizing:border-box;border:1.6px solid #3f7ec2;"></div>
<div class="b" style="left:2479.0px;top:25.5px;width:47px;height:47px;border-radius:50%;overflow:hidden;opacity:1"><div class="b" style="left:0;top:0;width:47px;height:47px;transform:scale(1.0000);transform-origin:0 0"><div class="b" style="left:0;top:0;width:47px;height:47px;background:#cfd4da"></div><div class="b" style="left:0;top:0;width:17px;height:47px;background:linear-gradient(90deg,#e6e9ef,#d5d8de)"></div><div class="b" style="left:6.5px;top:5px;width:2.2px;height:44px;background:#23232b"></div><div class="b" style="left:28px;top:0;width:20px;height:47px;background:linear-gradient(180deg,#aeb9a6 0%,#5d7a4a 30%,#3f5e30 60%,#8fa18a 100%)"></div><div class="b" style="left:41px;top:8px;width:8px;height:30px;background:#dfe4e6;border-radius:4px 0 0 4px;filter:blur(1.5px)"></div><div class="b" style="left:13px;top:5px;width:20px;height:20px;border-radius:10px;background:#1d1817"></div><div class="b" style="left:18.5px;top:11px;width:16px;height:21px;border-radius:8px 8px 8px 9px;background:#b88a72"></div><div class="b" style="left:14px;top:9px;width:9px;height:17px;border-radius:5px;background:#1d1817"></div><div class="b" style="left:18px;top:6px;width:14px;height:9px;border-radius:7px 7px 2px 6px;background:#1d1817"></div><div class="b" style="left:7px;top:34px;width:32px;height:16px;border-radius:12px 10px 0 0;background:#1f2542"></div><div class="b" style="left:20px;top:31px;width:8px;height:9px;background:#a97a64;transform:skewX(20deg)"></div></div></div>
<div class="b" style="left:2475.0px;top:140.0px;width:54px;height:54px;border-radius:50%;background:rgba(255,255,255,.145);overflow:hidden;opacity:1;"></div>
<svg class="b" style="left:2488px;top:152px;" width="28" height="30" viewBox="0 0 28 30"><path d="M14 3.500c-4.600 0-8 3.600-8 8.200v5.300l-2.500 4.500h21L22 17v-5.300c0-4.600-3.400-8.200-8-8.200zM10.500 25.500a3.600 3.600 0 0 0 7 0" fill="none" stroke="#c6d8ea" stroke-width="2.300" stroke-linejoin="round" stroke-linecap="round"/><path d="M14 1.500v2" stroke="#c6d8ea" stroke-width="2.300" stroke-linecap="round"/></svg>
<div class="b" style="left:2475.0px;top:211.0px;width:54px;height:54px;border-radius:50%;background:rgba(255,255,255,.145);overflow:hidden;opacity:1;"></div>
<svg class="b" style="left:2485px;top:221px;" width="34" height="34" viewBox="0 0 30 30"><g fill="none" stroke="#c6d8ea" stroke-linecap="round"><path d="M27 17A12.500 12.500 0 1 1 21 4.200" stroke-width="2"/><circle cx="14.500" cy="15" r="7.300" stroke-width="2"/></g><path d="M13.500 10.500l1.200 2.700 2.700 1.200-2.700 1.200-1.200 2.700-1.200-2.700-2.700-1.200 2.700-1.200z" fill="#c6d8ea"/><circle cx="17.600" cy="18.200" r="1.150" fill="#c6d8ea"/></svg>
<div class="b" style="left:2475.0px;top:282.0px;width:54px;height:54px;border-radius:50%;background:rgba(255,255,255,.145);overflow:hidden;opacity:1;"></div>
<svg class="b" style="left:2485px;top:292px;" width="34" height="34" viewBox="0 0 30 30"><path d="M14.500 3a11.500 11.500 0 1 0 6.400 21l5.100 1.700-1.500-4.700A11.500 11.500 0 0 0 14.500 3z" fill="none" stroke="#c6d8ea" stroke-width="2.300" stroke-linejoin="round"/><path d="M9 11.500h10M9 11.500l3-3M9 11.500l3 3M20 17.500H10M20 17.500l-3-3M20 17.500l-3 3" stroke="#c6d8ea" stroke-width="2" fill="none" stroke-linecap="round" stroke-linejoin="round"/></svg>
<div class="b" style="left:2482px;top:366.5px;width:40px;height:1.0px;background:rgba(255,255,255,.22);border-radius:0px;"></div>
<div class="b" style="left:2473.5px;top:396.5px;width:57px;height:57px;border-radius:50%;background:transparent;overflow:hidden;opacity:1;box-sizing:border-box;border:2px solid #4f6fc0;"></div>
<div class="b" style="left:2478.0px;top:401.0px;width:48px;height:48px;border-radius:50%;background:#1d4c88;overflow:hidden;opacity:1;"><div class="b" style="left:0;top:0;width:48px;height:48px;background:radial-gradient(circle at 50% 45%,#2f5f98,#173f7c)"></div><div class="b" style="left:15px;top:12px;width:18px;height:22px;border-radius:9px;background:#5f7ea8"></div><div class="b" style="left:12px;top:5px;width:24px;height:15px;border-radius:12px 12px 5px 5px;background:#2a62b4"></div><div class="b" style="left:11px;top:12px;width:6px;height:20px;border-radius:3px;background:#2a5ca8"></div><div class="b" style="left:31px;top:12px;width:6px;height:20px;border-radius:3px;background:#2a5ca8"></div><div class="b" style="left:6px;top:34px;width:36px;height:20px;border-radius:14px 14px 0 0;background:#2f64a4"></div></div>
<div class="b" style="left:2473.5px;top:474.5px;width:57px;height:57px;border-radius:50%;background:transparent;overflow:hidden;opacity:1;box-sizing:border-box;border:2px solid #6069c4;"></div>
<div class="b" style="left:2478.0px;top:479.0px;width:48px;height:48px;border-radius:50%;background:#564fc0;overflow:hidden;opacity:1;"></div>
<svg class="b" style="left:2486px;top:487px;" width="32" height="32" viewBox="0 0 32 32"><g fill="none" stroke="#b3b1e2" stroke-linecap="round"><path d="M28.500 18.500A13 13 0 1 1 25.500 7" stroke-width="2.800"/><path d="M23.500 16.500A8 8 0 1 1 20 9.300" stroke-width="2.600"/></g><circle cx="15.500" cy="16" r="5.400" fill="#b3b1e2"/><path d="M15.500 12l1.100 2.900 2.900 1.100-2.900 1.100-1.100 2.900-1.100-2.900-2.900-1.100 2.900-1.100z" fill="#564fc0"/></svg>
<div class="b" style="left:2475.0px;top:554.0px;width:54px;height:54px;border-radius:50%;background:#2c8ba3;overflow:hidden;opacity:1;"></div>
<svg class="b" style="left:2487.5px;top:566.5px;" width="29" height="29" viewBox="0 0 26 26"><path d="M3 1.5h20a1.5 1.5 0 0 1 1.5 1.500v20a1.500 1.500 0 0 1-1.500 1.500H3a1.500 1.500 0 0 1-1.500-1.500V3A1.500 1.500 0 0 1 3 1.500zm2 3.500v11h4.500v4.500h7V16H21V5z" fill="#9cc2cf" fill-rule="evenodd"/><path d="M9.200 10.200l2.800 2.800 4.800-5.200" stroke="#9cc2cf" stroke-width="2.400" fill="none"/></svg>
<div class="b" style="left:2475.0px;top:631.0px;width:54px;height:54px;border-radius:50%;background:#5864b8;overflow:hidden;opacity:1;"></div>
<svg class="b" style="left:2487.5px;top:643.5px;" width="29" height="29" viewBox="0 0 26 26"><path d="M3 1.5h20a1.5 1.5 0 0 1 1.5 1.500v20a1.500 1.500 0 0 1-1.500 1.500H3a1.500 1.500 0 0 1-1.500-1.500V3A1.500 1.500 0 0 1 3 1.500zm2 3.500v11h4.500v4.500h7V16H21V5z" fill="#a3abd8" fill-rule="evenodd"/><path d="M9.200 10.200l2.800 2.800 4.800-5.200" stroke="#a3abd8" stroke-width="2.400" fill="none"/></svg>
<div class="b" style="left:2475px;top:733px;width:32px;height:32px;border-radius:50%;background:#b3bccf;overflow:hidden;box-sizing:border-box;border:1.5px solid #7f90bd"><div class="b" style="left:9px;top:6px;width:12px;height:15px;border-radius:6px;background:#c7a79c"></div><div class="b" style="left:8px;top:3px;width:14px;height:8px;border-radius:7px 7px 2px 2px;background:#9a5e52"></div><div class="b" style="left:3px;top:21px;width:24px;height:12px;border-radius:9px 9px 0 0;background:#5f6a90"></div></div>
<div class="b" style="left:2500.5px;top:733px;width:32px;height:32px;border-radius:50%;background:#b3bccf;overflow:hidden;box-sizing:border-box;border:1.5px solid #7f90bd"><div class="b" style="left:9px;top:6px;width:12px;height:15px;border-radius:6px;background:#bda59e"></div><div class="b" style="left:8px;top:3px;width:14px;height:8px;border-radius:7px 7px 2px 2px;background:#2b2a36"></div><div class="b" style="left:3px;top:21px;width:24px;height:12px;border-radius:9px 9px 0 0;background:#5f6a90"></div></div>
<div class="b" style="left:2486px;top:707px;width:32px;height:32px;border-radius:50%;background:#b3bccf;overflow:hidden;box-sizing:border-box;border:1.5px solid #7f90bd"><div class="b" style="left:9px;top:6px;width:12px;height:15px;border-radius:6px;background:#c9b5ac"></div><div class="b" style="left:8px;top:3px;width:14px;height:8px;border-radius:7px 7px 2px 2px;background:#3a3c4a"></div><div class="b" style="left:3px;top:21px;width:24px;height:12px;border-radius:9px 9px 0 0;background:#5f6a90"></div></div>
<div class="b" style="left:2475.0px;top:786.5px;width:54px;height:54px;border-radius:50%;background:#6f86b4;overflow:hidden;opacity:1;"><div class="b" style="left:0;top:0;width:100%;height:100%;background:linear-gradient(180deg,#93a6cc,#5770a6)"></div><div class="b" style="left:17px;top:10px;width:20px;height:24px;border-radius:10px;background:#8a93b4"></div><div class="b" style="left:15px;top:6px;width:24px;height:13px;border-radius:12px 12px 4px 4px;background:#a3a2b2"></div><div class="b" style="left:7px;top:36px;width:40px;height:24px;border-radius:16px 16px 0 0;background:#52639a"></div></div>
<div class="b" style="left:2475.0px;top:864.5px;width:54px;height:54px;border-radius:50%;background:#3f72ba;overflow:hidden;opacity:1;"></div>
<svg class="b" style="left:2487px;top:881px;" width="30" height="22" viewBox="0 0 30 22"><rect x="1" y="1" width="28" height="20" rx="1.5" fill="#a0b0dc"/><path d="M1 2l14 11L29 2" stroke="#3f72ba" stroke-width="2.6" fill="none"/></svg>
<div class="b" style="left:2475.0px;top:942.5px;width:54px;height:54px;border-radius:50%;background:#a24e93;overflow:hidden;opacity:1;"></div>
<svg class="b" style="left:2484px;top:954.5px;" width="36" height="30" viewBox="0 0 36 30"><path d="M22.5 4c3 0 5 2.4 5 5.500 0 2.300-1 4.200-2.300 5.300v1.700l6 2.800c1.200.6 1.800 1.500 1.800 2.800V26H19z" fill="#c5a8d3" opacity=".8"/><path d="M13 2c3.300 0 5.600 2.600 5.600 6.200 0 2.600-1.100 4.700-2.600 5.900v1.900l6.700 3.100c1.400.7 2.100 1.700 2.100 3.100V27H1.200v-4.800c0-1.400.7-2.400 2.100-3.100L10 16v-1.900c-1.500-1.200-2.600-3.300-2.600-5.900C7.400 4.600 9.700 2 13 2z" fill="#c5a8d3"/></svg>
<div class="b" style="left:2475.0px;top:1020.0px;width:54px;height:54px;border-radius:50%;background:#416cb2;overflow:hidden;opacity:1;"></div>
<svg class="b" style="left:2484px;top:1032px;" width="36" height="30" viewBox="0 0 36 30"><path d="M22.5 4c3 0 5 2.4 5 5.500 0 2.300-1 4.200-2.300 5.300v1.700l6 2.800c1.200.6 1.800 1.500 1.800 2.800V26H19z" fill="#a0afd9" opacity=".8"/><path d="M13 2c3.300 0 5.600 2.600 5.600 6.200 0 2.600-1.100 4.700-2.600 5.900v1.900l6.700 3.100c1.400.7 2.100 1.700 2.100 3.100V27H1.200v-4.800c0-1.400.7-2.400 2.100-3.100L10 16v-1.900c-1.500-1.200-2.600-3.300-2.600-5.900C7.400 4.600 9.700 2 13 2z" fill="#a0afd9"/></svg>
<div class="b" style="left:2475.0px;top:1098.0px;width:54px;height:54px;border-radius:50%;background:#2f79c8;overflow:hidden;opacity:1;"></div>
<svg class="b" style="left:2492px;top:1112px;" width="20" height="26" viewBox="0 0 20 26"><path d="M1 1h18v24l-9-7.500L1 25z" fill="#90abdf"/></svg>
<div class="b" style="left:2475.0px;top:1175.5px;width:54px;height:54px;border-radius:50%;background:#7f8cb2;overflow:hidden;opacity:1;"><div class="b" style="left:11px;top:4px;width:32px;height:22px;border-radius:16px 16px 6px 6px;background:#a59eaa"></div><div class="b" style="left:9px;top:22px;width:6px;height:10px;border-radius:3px;background:#b097a2"></div><div class="b" style="left:39px;top:22px;width:6px;height:10px;border-radius:3px;background:#b097a2"></div><div class="b" style="left:12.500px;top:11px;width:29px;height:38px;border-radius:13px 13px 15px 15px;background:#b89da8"></div><div class="b" style="left:15px;top:36px;width:24px;height:14px;border-radius:4px 4px 12px 12px;background:#a98f9c"></div><div class="b" style="left:13px;top:5px;width:28px;height:12px;border-radius:14px 14px 4px 4px;background:#a8a0a8"></div><div class="b" style="left:8px;top:47px;width:38px;height:10px;border-radius:14px 14px 0 0;background:#b9a3ae"></div></div>
<div class="b" style="left:2475.0px;top:1253.5px;width:54px;height:54px;border-radius:50%;background:#99a2c4;overflow:hidden;opacity:1;"><div class="b" style="left:4px;top:36px;width:46px;height:22px;border-radius:18px 18px 0 0;background:#22284a"></div><div class="b" style="left:21px;top:36px;width:12px;height:18px;background:#c3c9de;clip-path:polygon(0 0,100% 0,70% 100%,30% 100%)"></div><div class="b" style="left:18.500px;top:14px;width:17px;height:22px;border-radius:8px 8px 9px 9px;background:#a8949c"></div><div class="b" style="left:17px;top:9px;width:20px;height:12px;border-radius:10px 10px 3px 3px;background:#2e2c3c"></div><div class="b" style="left:16.500px;top:14px;width:4px;height:10px;border-radius:2px;background:#2e2c3c"></div><div class="b" style="left:33.500px;top:14px;width:4px;height:10px;border-radius:2px;background:#2e2c3c"></div></div>
<div class="b" style="left:2475.0px;top:1332.0px;width:54px;height:54px;border-radius:50%;background:linear-gradient(180deg,#3489cc,#2878c0);overflow:hidden;opacity:1;"></div>
<svg class="b" style="left:2482px;top:1344px;" width="40" height="32" viewBox="0 0 40 32"><path d="M16 9h20a3 3 0 0 1 3 3v11a3 3 0 0 1-3 3h-2v4l-5-4H16a3 3 0 0 1-3-3V12a3 3 0 0 1 3-3z" fill="#5590cc"/><path d="M4 1h24a3 3 0 0 1 3 3v13a3 3 0 0 1-3 3H14l-6 5v-5H4a3 3 0 0 1-3-3V4a3 3 0 0 1 3-3z" fill="#86a6d0"/><path d="M7 8h18M7 13h13" stroke="#8aa563" stroke-width="2.600"/></svg>
</body></html>
